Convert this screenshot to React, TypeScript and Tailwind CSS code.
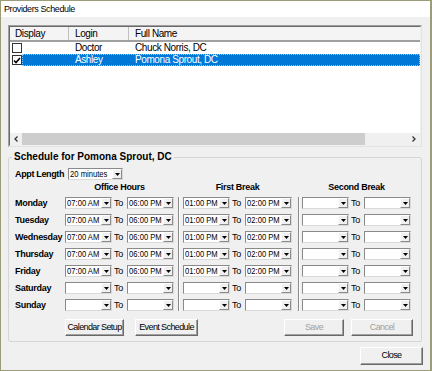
import React from 'react';

const SANS = "font-['Liberation_Sans',Arial,sans-serif]";

const days = ['Monday', 'Tuesday', 'Wednesday', 'Thursday', 'Friday', 'Saturday', 'Sunday'];
const workDays = 5;

const Arrow = () => (
  <svg width="5" height="3" viewBox="0 0 5 3">
    <path d="M0 0h5L2.5 3z" fill="#000" />
  </svg>
);

function Combo({ value, className = 'w-[47px]' }: { value?: string; className?: string }) {
  return (
    <div className={`flex h-[12px] border border-[#8a8a8a] border-r-[#dadada] border-b-[#dadada] bg-white ${className}`}>
      <div className="flex-1 overflow-hidden whitespace-nowrap pl-[1px] text-[9px] leading-[10px]">
        <div className="origin-left scale-x-[0.85]">{value}</div>
      </div>
      <div className="flex w-[10px] items-center justify-center border border-t-white border-l-white border-r-[#8a8a8a] border-b-[#8a8a8a] bg-[#f0f0f0]">
        <Arrow />
      </div>
    </div>
  );
}

function Pair({ a, b }: { a?: string; b?: string }) {
  return (
    <div className="flex h-[12px] items-center">
      <Combo value={a} />
      <span className="w-[15px] pl-[2px] text-[9px] leading-[12px] tracking-[-0.2px]">To</span>
      <Combo value={b} />
    </div>
  );
}

function Btn({ children, className = '', disabled = false }: { children: React.ReactNode; className?: string; disabled?: boolean }) {
  return (
    <div
      className={`flex items-center justify-center whitespace-nowrap border border-t-white border-l-white border-r-[#696969] border-b-[#696969] bg-[#f0f0f0] text-[9px] tracking-[-0.6px] shadow-[inset_-1px_-1px_0_#a0a0a0] ${
        disabled ? 'text-[#a0a0a0]' : 'text-black'
      } ${className}`}
    >
      {children}
    </div>
  );
}

function CheckBox({ checked }: { checked?: boolean }) {
  return (
    <div className="flex h-[10px] w-[10px] items-center justify-center border border-[#333] bg-white">
      {checked && (
        <svg width="8" height="7" viewBox="0 0 8 7">
          <path d="M1 3.5l2 2 4-4.5" stroke="#000" strokeWidth="1.6" fill="none" />
        </svg>
      )}
    </div>
  );
}

const Sep = () => (
  <div className="flex h-full">
    <div className="w-px bg-[#8a8a8a]" />
    <div className="w-px bg-white" />
  </div>
);

export default function App() {
  return (
    <div className={`flex h-[371px] w-[432px] flex-col border-t border-r-2 border-b border-l border-[#9c9c78] bg-[#f0f0f0] text-black ${SANS}`}>
      {/* title */}
      <div className="h-[16px] bg-white pl-[3px] text-[9px] leading-[16px] tracking-[-0.4px]">Providers Schedule</div>

      <div className="flex flex-col px-[7px]">
        {/* provider list */}
        <div className="mt-[8px] h-[122px] w-[414px] border border-[#a0a0a0] border-r-[#e3e3e3] border-b-[#e3e3e3] bg-white">
          <div className="flex h-full flex-col border border-[#696969] border-r-[#f0f0f0] border-b-[#f0f0f0] text-[10px] tracking-[-0.4px]">
            <div className="flex h-[15px] border-b-2 border-[#a0a0a0] bg-[#f4f4f4] leading-[13px]">
              <div className="w-[59px] border-r border-[#c0c0c0] pl-[5px]">Display</div>
              <div className="w-[60px] border-r border-[#c0c0c0] pl-[6px]">Login</div>
              <div className="flex-1 pl-[6px]">Full Name</div>
            </div>

            <div className="flex h-[12px] leading-[12px]">
              <div className="flex w-[12px] items-center pl-[2px]">
                <CheckBox />
              </div>
              <div className="w-[47px]" />
              <div className="w-[60px] pl-[6px]">Doctor</div>
              <div className="flex-1 pl-[6px]">Chuck Norris, DC</div>
            </div>
            <div className="flex h-[12px] leading-[12px]">
              <div className="flex w-[12px] items-center pl-[2px]">
                <CheckBox checked />
              </div>
              <div className="flex flex-1 bg-[#0078d7] text-white outline-1 outline-dotted outline-[#9cc8ee] -outline-offset-1">
                <div className="w-[47px]" />
                <div className="w-[60px] pl-[6px]">Ashley</div>
                <div className="flex-1 pl-[6px]">Pomona Sprout, DC</div>
              </div>
            </div>

            <div className="flex-1" />

            {/* horizontal scrollbar */}
            <div className="flex h-[12px] bg-[#f0f0f0]">
              <div className="flex w-[12px] items-center justify-center">
                <svg width="4" height="6" viewBox="0 0 4 6">
                  <path d="M3.5 0.5L1 3l2.5 2.5" stroke="#333" strokeWidth="1.3" fill="none" />
                </svg>
              </div>
              <div className="w-[343px] bg-[#cdcdcd]" />
              <div className="flex-1" />
              <div className="flex w-[12px] items-center justify-center">
                <svg width="4" height="6" viewBox="0 0 4 6">
                  <path d="M0.5 0.5L3 3L0.5 5.5" stroke="#333" strokeWidth="1.3" fill="none" />
                </svg>
              </div>
            </div>
          </div>
        </div>

        {/* schedule group */}
        <fieldset className="mt-[4px] w-[414px] rounded-[2px] border border-[#d5d5d5] px-[6px] pb-[5px]">
          <legend className="-ml-[3px] px-[2px] text-[10px] font-bold leading-[12px]">Schedule for Pomona Sprout, DC</legend>

          <div className="mt-[5px] flex h-[12px] items-center">
            <span className="w-[53px] whitespace-nowrap text-[9px] font-bold leading-[12px] tracking-[-0.35px]">Appt Length</span>
            <Combo value="20 minutes" className="w-[55px]" />
          </div>

          <div className="mt-[2px] grid grid-cols-[50px_109px_9px_109px_10px_109px] gap-y-[5px]">
            <div className="row-start-2 row-span-7 col-start-3 pl-[4px]">
              <Sep />
            </div>
            <div className="row-start-2 row-span-7 col-start-5 pl-[6px]">
              <Sep />
            </div>

            <div />
            <div className="h-[10px] whitespace-nowrap text-center text-[9px] font-bold leading-[10px] tracking-[-0.3px]">Office Hours</div>
            <div />
            <div className="h-[10px] whitespace-nowrap text-center text-[9px] font-bold leading-[10px] tracking-[-0.3px]">First Break</div>
            <div />
            <div className="h-[10px] whitespace-nowrap text-center text-[9px] font-bold leading-[10px] tracking-[-0.3px]">Second Break</div>

            {days.map((d, i) => {
              const on = i < workDays;
              return (
                <React.Fragment key={d}>
                  <div className="whitespace-nowrap text-[9px] font-bold leading-[12px] tracking-[-0.3px]">{d}</div>
                  <Pair a={on ? '07:00 AM' : undefined} b={on ? '06:00 PM' : undefined} />
                  <Pair a={on ? '01:00 PM' : undefined} b={on ? '02:00 PM' : undefined} />
                  <Pair />
                </React.Fragment>
              );
            })}
          </div>

          <div className="mt-[8px] mr-[2px] flex h-[17px]">
            <div className="w-[50px]" />
            <Btn className="w-[59px]">Calendar Setup</Btn>
            <Btn className="ml-[11px] w-[63px]">Event Schedule</Btn>
            <div className="flex-1" />
            <Btn disabled className="w-[60px]">Save</Btn>
            <Btn disabled className="ml-[7px] w-[62px]">Cancel</Btn>
          </div>
        </fieldset>

        <div className="mt-[5px] flex justify-end">
          <Btn className="h-[18px] w-[63px]">Close</Btn>
        </div>
      </div>
    </div>
  );
}
